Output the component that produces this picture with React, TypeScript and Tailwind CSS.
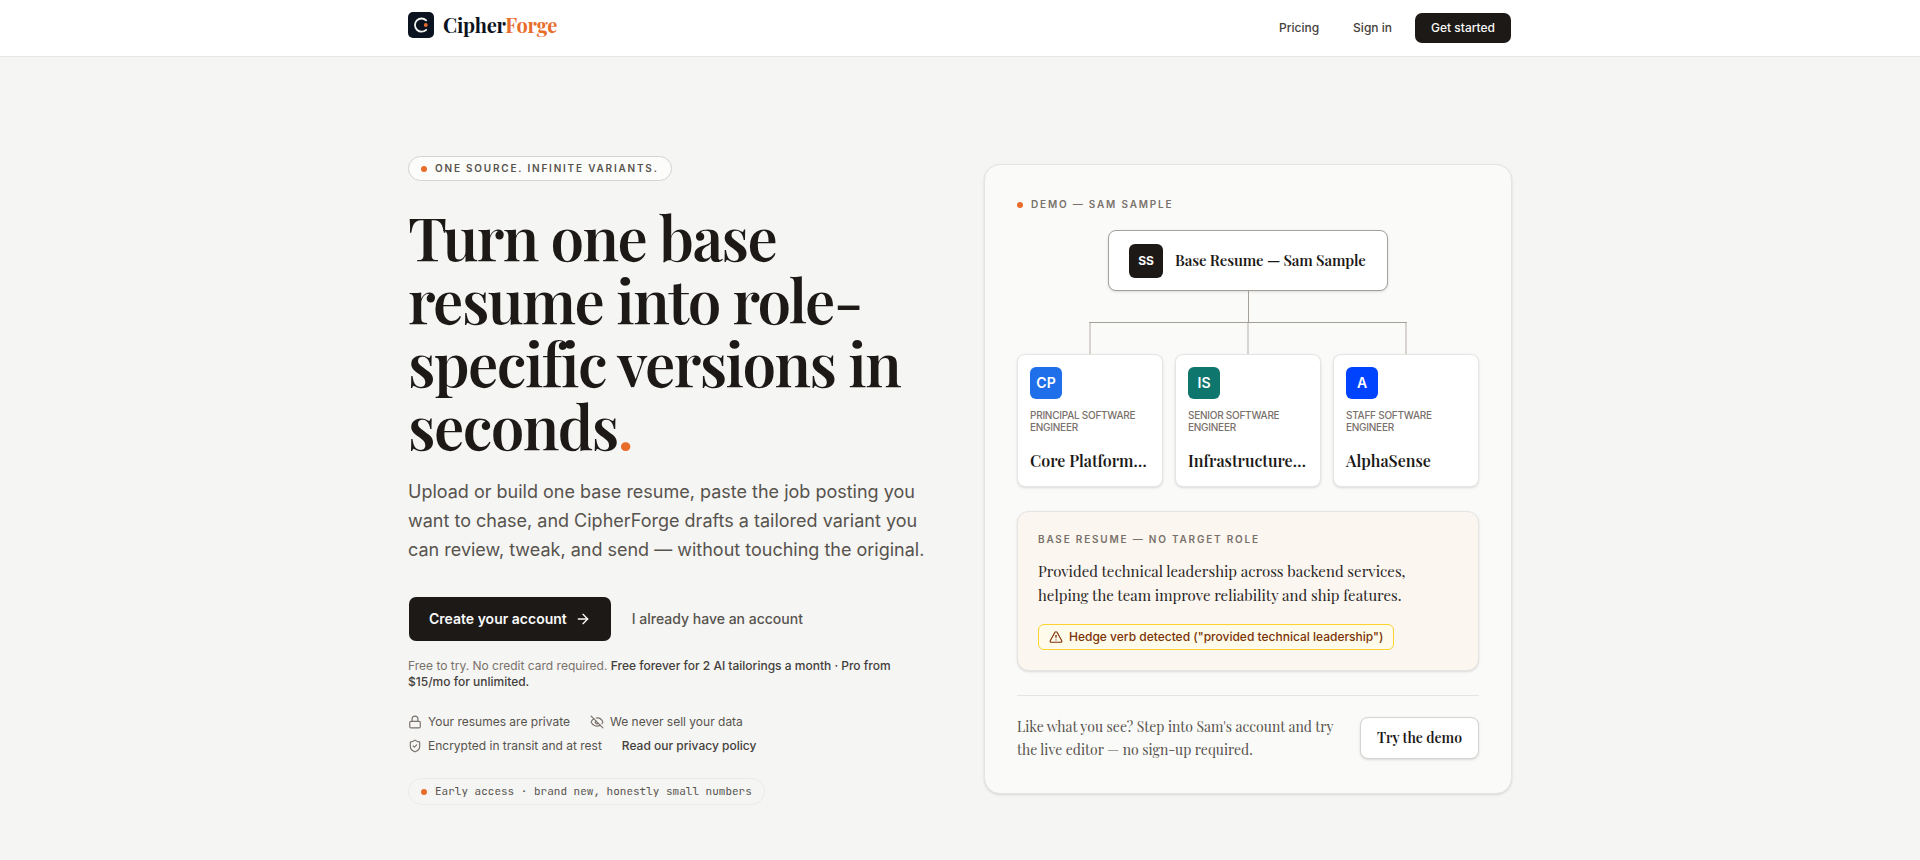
import { ArrowRight, EyeOff, Lock, ShieldCheck, TriangleAlert } from 'lucide-react';

interface Variant {
  initials: string;
  color: string;
  role: string;
  company: string;
}

const VARIANTS: Variant[] = [
  { initials: 'CP', color: 'bg-[#1f6feb]', role: 'Principal Software Engineer', company: 'Core Platform…' },
  { initials: 'IS', color: 'bg-[#0f766e]', role: 'Senior Software Engineer', company: 'Infrastructure…' },
  { initials: 'A', color: 'bg-[#0043ff]', role: 'Staff Software Engineer', company: 'AlphaSense' },
];

const SERIF = "font-['Playfair_Display','Liberation_Serif',serif]";
const EYEBROW = 'text-[10px] leading-[15px] font-semibold tracking-[0.18em] uppercase';

function Dot() {
  return <span className="size-1.5 shrink-0 rounded-full bg-[#e86c2a]" />;
}

function Logo() {
  return (
    <a href="#" className="flex items-center gap-[9px] pb-1.5">
      <svg viewBox="0 0 26 26" className="size-[26px]" aria-hidden="true">
        <rect width="26" height="26" rx="5" fill="#0b1220" />
        <path d="M18.2 8.4A6.6 6.6 0 1 0 18.2 17.8" fill="none" stroke="#f5f5f4" strokeWidth="1.8" strokeLinecap="round" />
        <circle cx="17.8" cy="13" r="1.9" fill="#e86c2a" />
      </svg>
      <span className={`${SERIF} text-[20px] leading-7 font-bold tracking-[-0.01em] text-[#0b1220]`}>
        Cipher<span className="text-[#e86c2a]">Forge</span>
      </span>
    </a>
  );
}

function Header() {
  return (
    <header className="border-b border-stone-200 bg-white">
      <div className="mx-auto flex h-14 max-w-6xl items-center justify-between px-6">
        <Logo />
        <nav className="flex items-center gap-2.5 text-xs font-medium text-stone-700">
          <a href="#" className="px-3">Pricing</a>
          <a href="#" className="px-3">Sign in</a>
          <button className="h-8 rounded-lg border border-transparent bg-stone-900 bg-clip-padding px-4 text-stone-50">
            Get started
          </button>
        </nav>
      </div>
    </header>
  );
}

function Hero() {
  return (
    <div>
      <div className={`flex h-[25px] w-fit items-center gap-2 rounded-full border border-stone-300 bg-[#fcfcfb] px-3 text-stone-600 ${EYEBROW}`}>
        <Dot />
        One source. Infinite variants.
      </div>

      <h1 className={`${SERIF} mt-6 text-[60px] leading-[63px] font-semibold tracking-tight text-stone-900`}>
        Turn one base resume into role-specific versions in seconds<span className="text-[#e86c2a]">.</span>
      </h1>

      <p className="mt-5 text-lg leading-[29px] text-stone-600">
        Upload or build one base resume, paste the job posting you want to chase, and CipherForge drafts a
        tailored variant you can review, tweak, and send — without touching the original.
      </p>

      <div className="mt-8 flex items-center gap-5 text-sm">
        <button className="flex h-[46px] items-center gap-2 rounded-lg border border-transparent bg-stone-900 bg-clip-padding px-5 font-semibold text-stone-50">
          Create your account
          <ArrowRight className="size-4" />
        </button>
        <a href="#" className="font-medium text-stone-600">I already have an account</a>
      </div>

      <p className="mt-4 text-xs text-stone-500">
        Free to try. No credit card required.{' '}
        <strong className="font-medium text-stone-700">
          Free forever for 2 AI tailorings a month · Pro from $15/mo for unlimited.
        </strong>
      </p>

      <ul className="mt-6 flex max-w-[400px] flex-wrap gap-x-5 gap-y-2 text-xs text-stone-600">
        <li className="flex items-center gap-1.5">
          <Lock className="size-3.5 text-stone-500" />
          Your resumes are private
        </li>
        <li className="flex items-center gap-1.5">
          <EyeOff className="size-3.5 text-stone-500" />
          We never sell your data
        </li>
        <li className="flex items-center gap-1.5">
          <ShieldCheck className="size-3.5 text-stone-500" />
          Encrypted in transit and at rest
        </li>
        <li>
          <a href="#" className="font-medium text-stone-700">Read our privacy policy</a>
        </li>
      </ul>

      <div className="mt-6 flex h-[27px] w-fit items-center gap-2 rounded-full border border-stone-200/70 px-3 font-['JetBrains_Mono','Liberation_Mono',monospace] text-[11px] text-stone-600">
        <Dot />
        Early access · brand new, honestly small numbers
      </div>
    </div>
  );
}

function VariantTree() {
  return (
    <div>
      <div className="mx-auto flex h-[61px] w-[280px] items-center gap-3 rounded-lg border border-stone-400 bg-white px-5 shadow-sm">
        <span className="flex size-[34px] shrink-0 items-center justify-center rounded-md bg-stone-900 text-xs font-bold text-stone-50">
          SS
        </span>
        <span className={`${SERIF} text-[15px] font-semibold tracking-[-0.01em] whitespace-nowrap text-stone-900`}>
          Base Resume — Sam Sample
        </span>
      </div>

      {/* trunk, then one branch per variant */}
      <div className="mx-auto h-[31px] w-px bg-stone-400" />
      <div className="mx-[72px] flex h-8 justify-between border-t border-stone-400">
        {VARIANTS.map((v) => (
          <div key={v.initials} className="w-0.5 bg-stone-300" />
        ))}
      </div>

      <div className="grid grid-cols-3 gap-3">
        {VARIANTS.map((v) => (
          <div key={v.initials} className="h-[133px] rounded-lg border border-stone-200 bg-white p-3 shadow-sm">
            <span className={`flex size-8 items-center justify-center rounded-md text-sm font-semibold text-white ${v.color}`}>
              {v.initials}
            </span>
            <p className="mt-2.5 text-[10px] leading-3 font-medium tracking-tight text-stone-500 uppercase">{v.role}</p>
            <p className={`${SERIF} mt-4 text-[16px] leading-6 font-semibold whitespace-nowrap text-stone-900`}>{v.company}</p>
          </div>
        ))}
      </div>
    </div>
  );
}

function DemoCard() {
  return (
    <section className="mt-2 rounded-2xl border border-stone-200 bg-stone-50 p-8 shadow-sm">
      <div className={`mb-[18px] flex items-center gap-2 text-stone-500 ${EYEBROW}`}>
        <Dot />
        Demo — Sam Sample
      </div>

      <VariantTree />

      <div className="mt-6 rounded-xl border border-stone-200 bg-[#fbf6f0] p-5 shadow-sm">
        <p className={`text-stone-500 ${EYEBROW}`}>Base resume — no target role</p>
        <p className={`${SERIF} mt-3 text-[15px] leading-6 text-stone-800`}>
          Provided technical leadership across backend services, helping the team improve reliability and ship
          features.
        </p>
        <div className="mt-[17px] flex h-[26px] w-fit items-center gap-1.5 rounded-md border border-amber-300 bg-amber-50 px-2.5 text-xs font-medium text-amber-900">
          <TriangleAlert className="size-3.5" />
          Hedge verb detected ("provided technical leadership")
        </div>
      </div>

      <div className="mt-6 flex items-center justify-between gap-6 border-t border-stone-200 pt-[19px]">
        <p className={`${SERIF} text-sm leading-[23px] text-stone-600`}>
          Like what you see? Step into Sam's account and try the live editor — no sign-up required.
        </p>
        <button className={`${SERIF} h-[42px] shrink-0 rounded-lg border border-stone-300 bg-white px-4 text-sm font-semibold text-stone-900 shadow-sm`}>
          Try the demo
        </button>
      </div>
    </section>
  );
}

export default function App() {
  return (
    <div className="min-h-screen bg-stone-100 font-['Inter',sans-serif] antialiased">
      <Header />
      <main className="mx-auto grid max-w-6xl grid-cols-2 items-start gap-12 px-6 pt-[99px] pb-12">
        <Hero />
        <DemoCard />
      </main>
    </div>
  );
}
